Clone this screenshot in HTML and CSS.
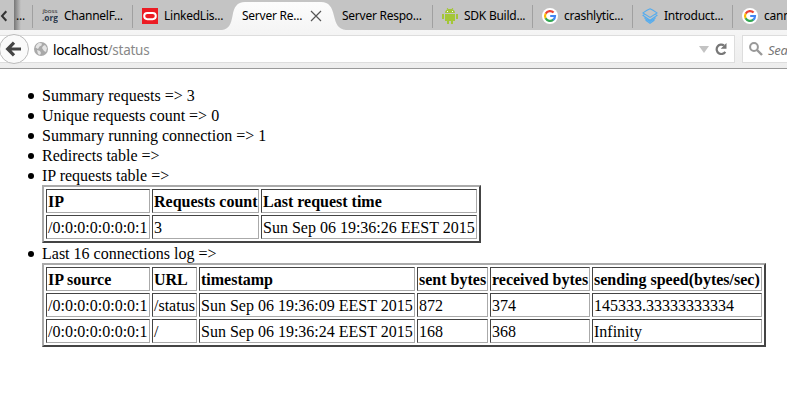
FILE: index.html
```
<!DOCTYPE html>
<html lang="en">
<head>
<meta charset="utf-8">
<title>Server Response</title>
<link rel="stylesheet" href="styles.css">
</head>
<body>
<svg class="defs" width="0" height="0">
  <symbol id="google" viewBox="0 0 16 16">
    <circle cx="8" cy="8" r="8" fill="#fff"/>
    <g fill="none" stroke-width="2.2">
      <path d="M11.6 4.6A5 5 0 0 0 3.7 5.6" stroke="#ea4335"/>
      <path d="M3.7 5.5A5 5 0 0 0 3.7 10.5" stroke="#fbbc05"/>
      <path d="M3.6 10.3A5 5 0 0 0 11.3 11.7" stroke="#34a853"/>
      <path d="M11.2 11.8A5 5 0 0 0 13 8H8.2" stroke="#4285f4"/>
    </g>
  </symbol>
</svg>
<header class="browser">
  <nav class="tabs">
    <div class="scroll"><svg width="14" height="30" viewBox="0 0 14 30"><path d="M6.3 11.3L2 16l4.3 4.7" fill="none" stroke="#333" stroke-width="2"/></svg></div>
    <div class="cut">...</div>
    <div class="tab sep">
      <svg width="16" height="16" viewBox="0 0 16 16"><text x="0.500" y="5" class="jb" textLength="15" lengthAdjust="spacingAndGlyphs">jboss</text><text x="0" y="13" class="org" textLength="16" lengthAdjust="spacingAndGlyphs">.org</text></svg>
      <span>ChannelF...</span></div>
    <div class="tab sep">
      <svg width="16" height="16" viewBox="0 0 16 16"><path fill="#ec1c24" d="M0 0h16v16H0z"/><rect x="2.2" y="4.9" width="11.6" height="6.3" rx="3.1" fill="none" stroke="#fff" stroke-width="2"/></svg>
      <span>LinkedLis...</span></div>
    <div class="tab active">
      <svg class="shape" width="124" height="30" viewBox="0 0 124 30"><defs><linearGradient id="g" x2="0" y2="1"><stop stop-color="#fcfcfc"/><stop offset="1" stop-color="#f5f5f5"/></linearGradient></defs><path fill="url(#g)" d="M0 30C7 29 9 24 10.500 16C12 7 15 2 23 2H99C107 2 110 7 112 16C114 24 116 29 124 30Z"/></svg>
      <span>Server Re...</span>
      <svg class="close" width="12" height="12" viewBox="0 0 12 12"><path d="M1 1l10 10M11 1L1 11" stroke="#555" stroke-width="1.2"/></svg></div>
    <div class="tab"><span>Server Respo...</span></div>
    <div class="tab sep">
      <svg width="16" height="16" viewBox="0 0 16 16" fill="#a4c639"><path d="M3 5C3 3 4.500 1.700 5.500 1.300L4.600 0h1l.8 1h3.200l.8-1h1l-.9 1.300C11.500 1.700 13 3 13 5zM3 6h10v7H3zM0 6h2v5H0zM14 6h2v5h-2zM5 12h2v4H5zM9 12h2v4H9z"/><path fill="#fff" d="M5 3h1v1H5zM10 3h1v1h-1z"/></svg>
      <span>SDK Build...</span></div>
    <div class="tab sep"><svg width="16" height="16"><use href="#google"/></svg><span>crashlytic...</span></div>
    <div class="tab sep">
      <svg width="16" height="16" viewBox="0 0 16 16" fill="none" stroke="#55acee" stroke-width="1.100"><path d="M8 .8l3 1.500 4 2.600-7 4.500-7-4.500 4-2.600zM2.500 6L1 7.500l7 4.800 7-4.800L13.500 6M3 9v1.500l5 3 5-3V9M4 11.500v1L8 15.300l4-2.800v-1"/></svg>
      <span>Introduct...</span></div>
    <div class="tab sep"><svg width="16" height="16"><use href="#google"/></svg><span>cann</span></div>
  </nav>
  <div class="toolbar">
    <div class="url">
      <svg class="globe" width="14" height="14" viewBox="0 0 14 14"><circle cx="7" cy="7" r="7" fill="#a9a9a9"/><path fill="#e5e5e5" d="M5 .8l3 .7-.5 2-2 1L4 7 1.500 5.500 2.500 3zM9 4l2-1 2 3-1 4-2-1-2-3zM3 8l3 1 1 2-1 2-2-1z"/></svg>
      <span class="address">localhost<span class="path">/status</span></span>
      <svg class="drop" width="10" height="7" viewBox="0 0 10 7"><path fill="#c3c3c3" d="M0 0h10L5 7z"/></svg>
      <svg class="reload" width="12" height="12" viewBox="0 0 12 12"><path d="M10.300 8.900A4.700 4.700 0 1 1 9 2.400" fill="none" stroke="#777" stroke-width="2.200"/><path fill="#777" d="M11.500 0v5.800H5.700z"/></svg>
    </div>
    <div class="search">
      <svg width="14" height="14" viewBox="0 0 14 14" fill="none" stroke="#999"><circle cx="5" cy="5" r="3.900" stroke-width="2"/><path d="M8 8l5 5" stroke-width="2.400"/></svg>
      <span>Search</span>
    </div>
    <svg class="back" width="32" height="32" viewBox="0 0 32 32"><circle cx="15" cy="16" r="14.500" fill="#fafafa" stroke="#bbb"/><path d="M22 16H9M15 9.700L8.700 16l6.300 6.300" fill="none" stroke="#444" stroke-width="3.200"/></svg>
  </div>
</header>
<main>
  <ul>
    <li>Summary requests =&gt; 3</li>
    <li>Unique requests count =&gt; 0</li>
    <li>Summary running connection =&gt; 1</li>
    <li>Redirects table =&gt;</li>
    <li>IP requests table =&gt;
      <table class="ips">
        <colgroup><col class="c104"><col class="c107"><col class="c216"></colgroup>
        <tr><th>IP</th><th>Requests count</th><th>Last request time</th></tr>
        <tr><td>/0:0:0:0:0:0:0:1</td><td>3</td><td>Sun Sep 06 19:36:26 EEST 2015</td></tr>
      </table>
    </li>
    <li>Last 16 connections log =&gt;
      <table class="log">
        <colgroup><col class="c104"><col class="c45"><col class="c216"><col class="c71"><col class="c100"><col class="c170"></colgroup>
        <tr><th>IP source</th><th>URL</th><th>timestamp</th><th>sent bytes</th><th>received bytes</th><th>sending speed(bytes/sec)</th></tr>
        <tr><td>/0:0:0:0:0:0:0:1</td><td>/status</td><td>Sun Sep 06 19:36:09 EEST 2015</td><td>872</td><td>374</td><td>145333.33333333334</td></tr>
        <tr><td>/0:0:0:0:0:0:0:1</td><td>/</td><td>Sun Sep 06 19:36:24 EEST 2015</td><td>168</td><td>368</td><td>Infinity</td></tr>
      </table>
    </li>
  </ul>
</main>
</body>
</html>
```
FILE: styles.css
```
* { box-sizing: border-box; }
body { margin: 0; background: #fff; color: #000; overflow: hidden; font: 16px/20px "Liberation Serif", serif; }
.defs { position: absolute; }
.browser { font-family: "Noto Sans", "Open Sans", sans-serif; width: 787px; overflow: hidden; }
.tabs { display: flex; height: 30px; background: #c4c4c4; font-size: 12px; letter-spacing: -.25px; line-height: 30px; white-space: nowrap; }
.scroll { width: 14px; flex: none; }
.cut { width: 18px; flex: none; padding-left: 2px; padding-top: 1px; background: linear-gradient(90deg, #777, #c4c4c4 7px); }
.tab { position: relative; flex: none; width: 100px; height: 30px; display: flex; align-items: center; padding-left: 10px; padding-top: 1px; gap: 6px; }
.tab > svg { flex: none; }
.tab span { position: relative; }
.sep::before { content: ""; position: absolute; left: 0; top: 5px; width: 1px; height: 23px; background: #a0a0a0; }
.tab .shape { position: absolute; left: -10px; top: 0; z-index: 1; }
.active span { z-index: 2; }
.tab .close { position: absolute; left: 78px; top: 10px; z-index: 2; }
.jb { font: 6px "Open Sans", sans-serif; fill: #222; letter-spacing: 0; }
.org { font: bold 9px "Open Sans", sans-serif; fill: #2c3b4d; letter-spacing: 0; }
.toolbar { position: relative; height: 39px; display: flex; gap: 7px; padding-top: 5px; background: linear-gradient(#f5f5f5, #ededed); border-bottom: 1px solid #999; }
.url { display: flex; align-items: center; width: 735px; height: 28px; border: 1px solid #ddd; border-left: 0; background: #fff; padding-left: 34px; flex: none; }
.address { font-size: 13.5px; letter-spacing: -.27px; margin-left: 5px; line-height: 24px; padding-top: 2px; }
.path { color: #888; }
.drop { margin-left: auto; margin-right: 6px; }
.reload { margin-right: 7px; }
.search { flex: none; width: 60px; height: 28px; border: 1px solid #ddd; background: #fff; display: flex; align-items: center; gap: 5px; padding-left: 6px; font-size: 13px; font-style: italic; color: #777; letter-spacing: -.3px; }
.search svg { flex: none; }
.search span { padding-top: 1px; }
.back { position: absolute; left: -1px; top: 3px; }
ul { margin: 17px 0 0; padding: 0 0 0 42px; list-style: none; }
li { position: relative; }
li::before { content: ""; position: absolute; left: -14px; top: 7px; width: 6px; height: 6px; border-radius: 50%; background: #000; }
table { margin: -1px 0 0; border: 2px solid; border-color: #aaa #444 #444 #aaa; border-spacing: 2px; border-collapse: separate; table-layout: fixed; line-height: 20px; white-space: nowrap; }
.ips { width: 439px; margin-bottom: 1px; }
.log { width: 724px; }
th, td { padding: 2px 1px 0; border: 1px solid; border-color: #444 #aaa #aaa #444; text-align: left; height: 24px; }
.c104 { width: 104px; }
.c107 { width: 107px; }
.c216 { width: 216px; }
.c45 { width: 45px; }
.c71 { width: 71px; }
.c100 { width: 100px; }
.c170 { width: 170px; }
```
